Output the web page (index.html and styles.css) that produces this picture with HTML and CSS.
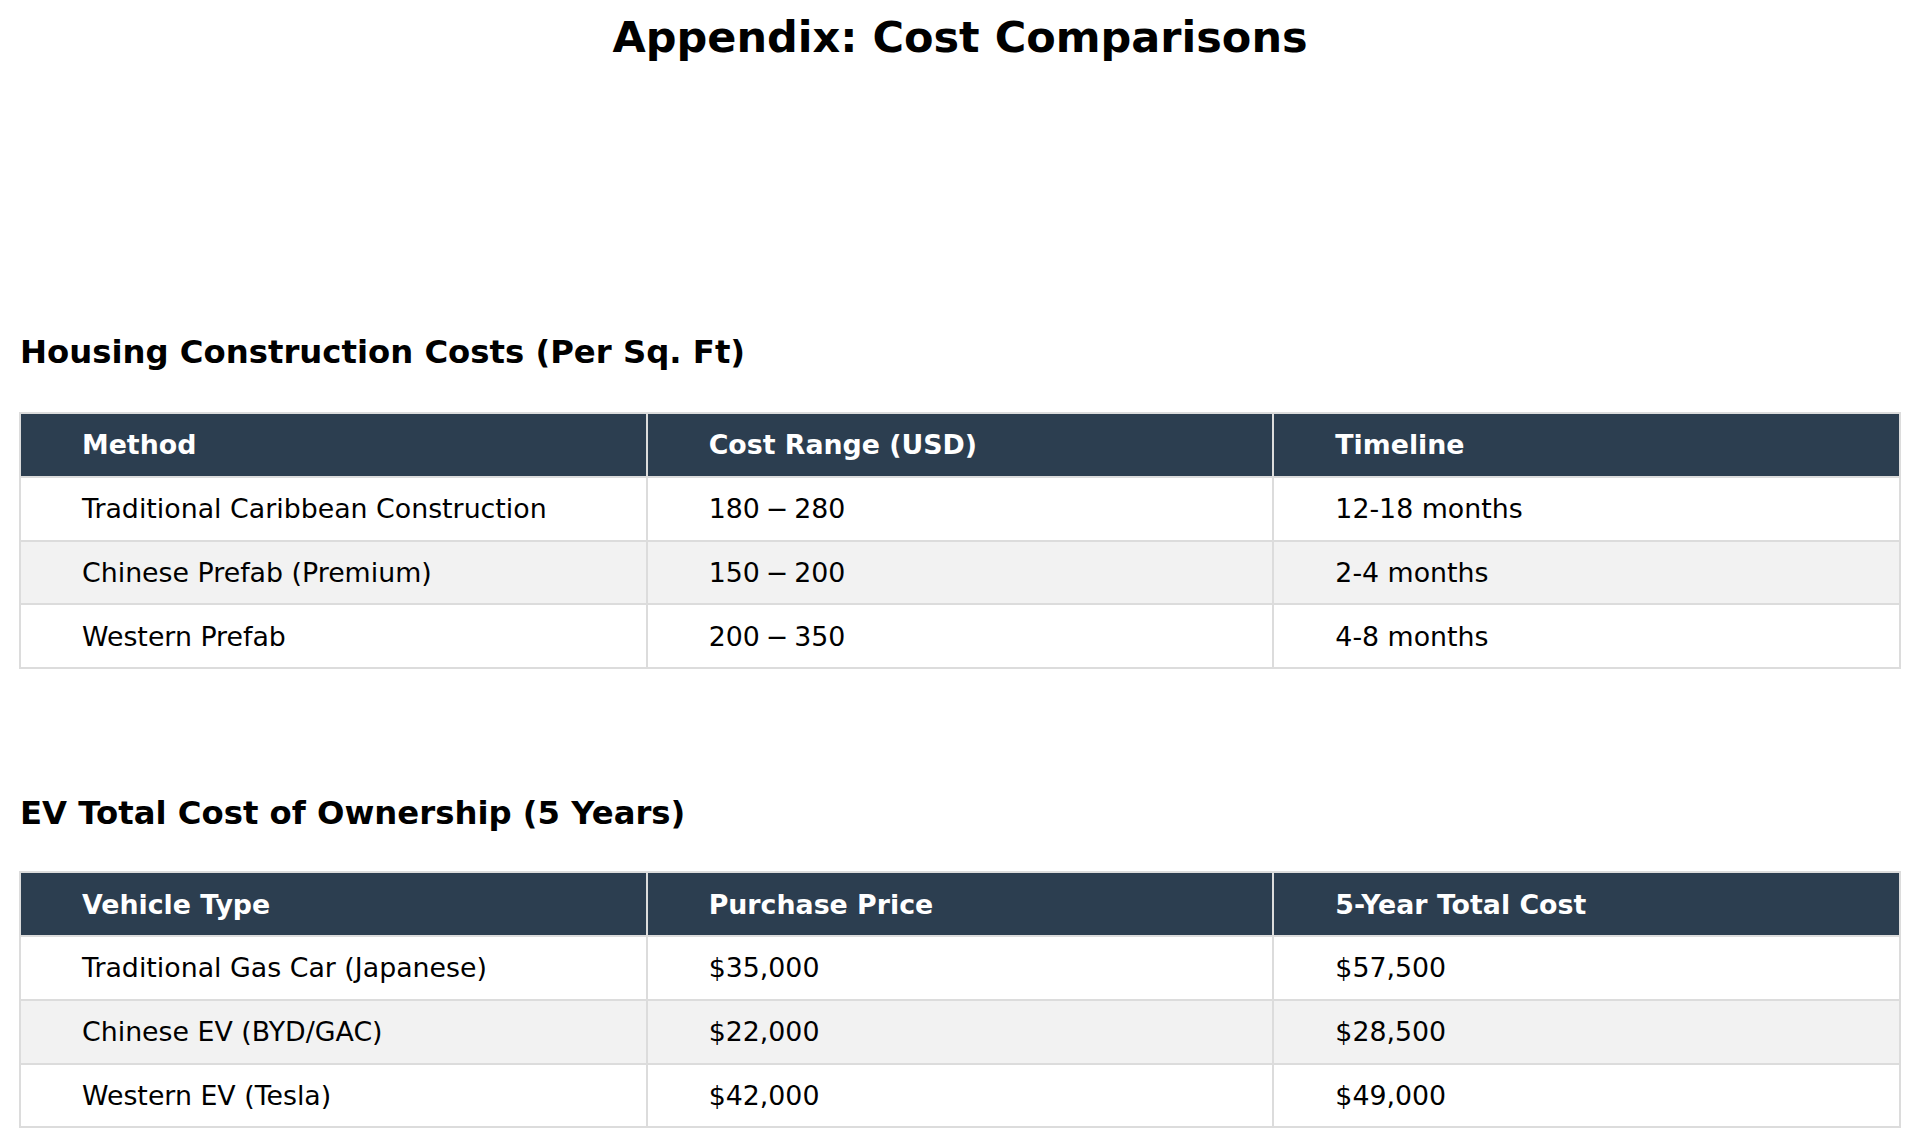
FILE: index.html
```html
<!DOCTYPE html>
<html>
<head>
<meta charset="utf-8">
<link rel="stylesheet" href="styles.css">
</head>
<body>
<div class="page">
  <h1 class="title">Appendix: Cost Comparisons</h1>

  <h2 class="heading heading-first">Housing Construction Costs (Per Sq. Ft)</h2>
  <div class="table">
    <div class="cell head">Method</div>
    <div class="cell head">Cost Range (USD)</div>
    <div class="cell head">Timeline</div>

    <div class="cell">Traditional Caribbean Construction</div>
    <div class="cell">180<span class="op">−</span>280</div>
    <div class="cell">12-18 months</div>

    <div class="cell alt">Chinese Prefab (Premium)</div>
    <div class="cell alt">150<span class="op">−</span>200</div>
    <div class="cell alt">2-4 months</div>

    <div class="cell">Western Prefab</div>
    <div class="cell">200<span class="op">−</span>350</div>
    <div class="cell">4-8 months</div>
  </div>

  <h2 class="heading heading-second">EV Total Cost of Ownership (5 Years)</h2>
  <div class="table">
    <div class="cell head">Vehicle Type</div>
    <div class="cell head">Purchase Price</div>
    <div class="cell head">5-Year Total Cost</div>

    <div class="cell">Traditional Gas Car (Japanese)</div>
    <div class="cell">$35,000</div>
    <div class="cell">$57,500</div>

    <div class="cell alt">Chinese EV (BYD/GAC)</div>
    <div class="cell alt">$22,000</div>
    <div class="cell alt">$28,500</div>

    <div class="cell">Western EV (Tesla)</div>
    <div class="cell">$42,000</div>
    <div class="cell">$49,000</div>
  </div>
</div>
</body>
</html>
```

FILE: styles.css
```css
html, body {
  margin: 0;
  padding: 0;
  background: #ffffff;
}

body {
  font-family: "DejaVu Sans", sans-serif;
  color: #000000;
}

.page {
  width: 1920px;
  height: 1146px;
  overflow: hidden;
  padding-top: 12px;
  box-sizing: border-box;
}

.title {
  margin: 0;
  text-align: center;
  font-size: 43px;
  font-weight: bold;
  line-height: normal;
}

.heading {
  margin: 0 0 0 20px;
  font-size: 32.3px;
  font-weight: bold;
  line-height: normal;
}

.heading-first {
  margin-top: 271px;
}

.heading-second {
  margin-top: 125px;
}

.table {
  margin: 41px 0 0 19px;
  width: 1882px;
  box-sizing: border-box;
  display: grid;
  grid-template-columns: 1fr 1fr 1fr;
  grid-auto-rows: 61.8px;
  gap: 2px;
  padding: 2px;
  background: #dcdcdc;
}

.heading-second + .table {
  margin-top: 39px;
}

.cell {
  background: #ffffff;
  display: flex;
  align-items: center;
  padding-left: 61px;
  font-size: 26.8px;
  white-space: nowrap;
}

.cell.alt {
  background: #f2f2f2;
}

.cell.head {
  background: #2c3e50;
  color: #ffffff;
  font-weight: bold;
}

.op {
  padding: 0 6px;
}
```
